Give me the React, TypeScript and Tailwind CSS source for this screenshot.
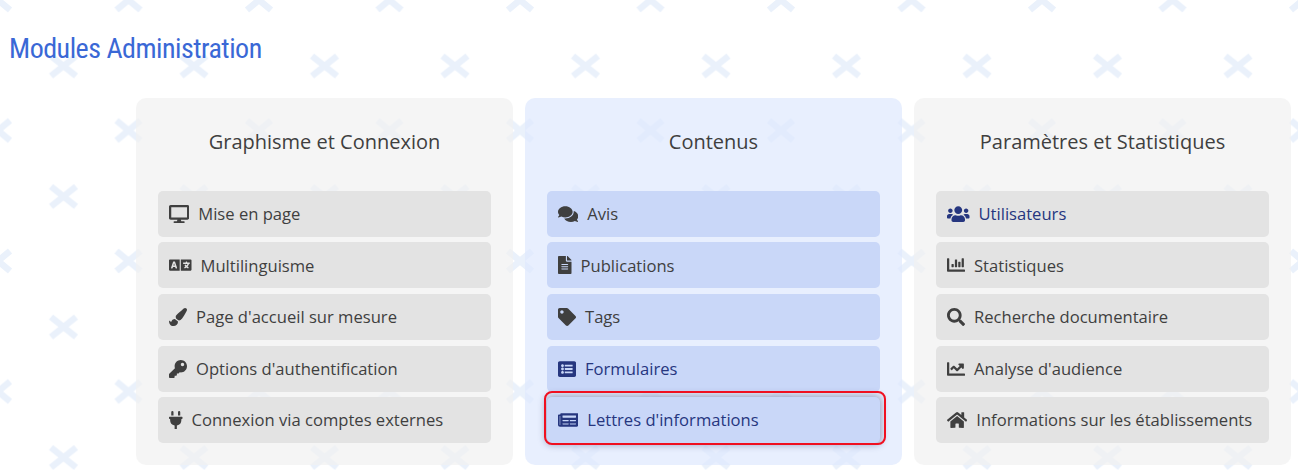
import type { ReactNode } from "react";
import {
  FaChartBar,
  FaChartLine,
  FaComments,
  FaDesktop,
  FaFileAlt,
  FaHome,
  FaKey,
  FaLanguage,
  FaListAlt,
  FaNewspaper,
  FaPaintBrush,
  FaPlug,
  FaSearch,
  FaTag,
  FaUsers,
} from "react-icons/fa";

interface Item {
  label: string;
  icon: ReactNode;
  blue?: boolean;
  outlined?: boolean;
}

const graphisme: Item[] = [
  { label: "Mise en page", icon: <FaDesktop className="h-[18px] w-[20.25px]" /> },
  { label: "Multilinguisme", icon: <FaLanguage className="h-[18px] w-[22.5px]" /> },
  { label: "Page d'accueil sur mesure", icon: <FaPaintBrush className="h-[18px] w-[18px]" /> },
  { label: "Options d'authentification", icon: <FaKey className="h-[18px] w-[18px]" /> },
  { label: "Connexion via comptes externes", icon: <FaPlug className="h-[18px] w-[13.5px]" /> },
];

const contenus: Item[] = [
  { label: "Avis", icon: <FaComments className="h-[18px] w-[20.25px]" /> },
  { label: "Publications", icon: <FaFileAlt className="h-[18px] w-[13.5px]" /> },
  { label: "Tags", icon: <FaTag className="h-[18px] w-[18px]" /> },
  { label: "Formulaires", icon: <FaListAlt className="h-[18px] w-[18px]" />, blue: true },
  { label: "Lettres d'informations", icon: <FaNewspaper className="h-[18px] w-[20.25px]" />, blue: true, outlined: true },
];

const parametres: Item[] = [
  { label: "Utilisateurs", icon: <FaUsers className="h-[18px] w-[22.5px]" />, blue: true },
  { label: "Statistiques", icon: <FaChartBar className="h-[18px] w-[18px]" /> },
  { label: "Recherche documentaire", icon: <FaSearch className="h-[18px] w-[18px]" /> },
  { label: "Analyse d'audience", icon: <FaChartLine className="h-[18px] w-[18px]" /> },
  { label: "Informations sur les établissements", icon: <FaHome className="h-[18px] w-[20.25px]" /> },
];

// motif de croix en fond de page
function CrossBackground() {
  return (
    <svg className="absolute inset-0 h-full w-full" aria-hidden="true">
      <defs>
        <pattern id="crosses" x="-2" y="0" width="130.5" height="130.5" patternUnits="userSpaceOnUse">
          <g stroke="#eaf1fb" strokeWidth="6.5">
            <path d="M53 56 L78 76 M78 56 L53 76" />
            <path d="M-12 -10 L12 10 M12 -10 L-12 10" />
            <path d="M118.5 -10 L142.5 10 M142.5 -10 L118.5 10" />
            <path d="M-12 120.5 L12 140.5 M12 120.5 L-12 140.5" />
            <path d="M118.5 120.5 L142.5 140.5 M142.5 120.5 L118.5 140.5" />
          </g>
        </pattern>
      </defs>
      <rect width="100%" height="100%" fill="url(#crosses)" />
    </svg>
  );
}

function ModuleRow({ item, active }: { item: Item; active?: boolean }) {
  return (
    <div
      className={`relative flex h-[46px] items-center gap-[9px] rounded-[5px] pl-[11px] text-[16.6px] ${
        active ? "bg-[#c9d7f8]" : "bg-[#e3e3e3]"
      } ${item.blue ? "text-[#26367f]" : "text-[#3f3f3f]"} ${
        item.outlined ? "shadow-[0_0_7px_2px_rgba(50,60,110,0.4)]" : ""
      }`}
    >
      <span className="flex shrink-0 items-center">{item.icon}</span>
      <span className="pt-[1.5px]">{item.label}</span>
      {item.outlined && (
        <span className="absolute -top-[6px] -right-[6px] -bottom-[2px] -left-[3px] rounded-[8px] border-2 border-[#f01020]" />
      )}
    </div>
  );
}

function ModuleCard({ title, items, active }: { title: string; items: Item[]; active?: boolean }) {
  return (
    <div className={`w-[377px] rounded-[10px] px-[22px] pt-[30px] pb-[22px] ${active ? "bg-[#dee8fe]/70" : "bg-[#f1f1f1]/70"}`}>
      <h3 className="mb-[35.8px] text-center text-[20px] leading-[27px] font-normal text-[#3f3f3f]">{title}</h3>
      <div className="flex flex-col gap-[5.6px]">
        {items.map((item) => (
          <ModuleRow key={item.label} item={item} active={active} />
        ))}
      </div>
    </div>
  );
}

export default function App() {
  return (
    <div className="relative h-[470px] w-[1298px] overflow-hidden bg-white font-['Open_Sans',sans-serif]">
      <CrossBackground />

      <div className="relative">
        <h2 className="pt-[31px] pl-[9px] font-['Liberation_Sans_Narrow','Roboto_Condensed',Roboto,sans-serif] text-[28px] leading-[36px] font-normal tracking-[-0.5px] text-[#3a68d6]">
          Modules Administration
        </h2>

        <div className="mt-[31px] flex gap-[12px] pl-[136px]">
          <ModuleCard title="Graphisme et Connexion" items={graphisme} />
          <ModuleCard title="Contenus" items={contenus} active />
          <ModuleCard title="Paramètres et Statistiques" items={parametres} />
        </div>
      </div>
    </div>
  );
}
